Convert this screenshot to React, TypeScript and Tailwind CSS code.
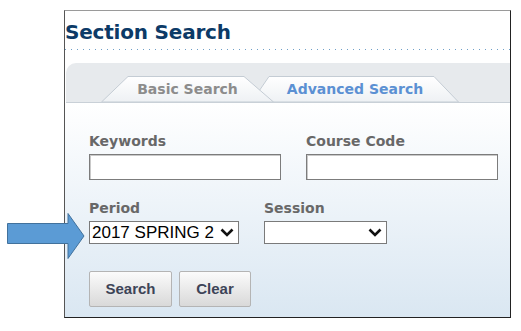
import React from 'react'

const sans = "font-['DejaVu_Sans',Verdana,sans-serif]"
const arial = "font-['Liberation_Sans',Arial,sans-serif]"

function Chevron() {
  return (
    <svg width="14" height="9" viewBox="0 0 14 9" className="shrink-0">
      <path d="M1.5 1.5 L7 7 L12.5 1.5" fill="none" stroke="#111" strokeWidth="2.6" strokeLinejoin="miter" />
    </svg>
  )
}

function Tab({ id, label, active, width, points }: { id: string; label: string; active?: boolean; width: number; points: string }) {
  return (
    <div className={`relative h-[26px] flex items-center justify-center ${active ? 'z-10' : 'z-0'}`} style={{ width }}>
      <svg className="absolute inset-0" width={width} height="26" viewBox={`0 0 ${width} 26`}>
        <defs>
          <linearGradient id={id} x1="0" y1="0" x2="0" y2="1">
            <stop offset="0" stopColor="#ffffff" />
            <stop offset="1" stopColor="#eef1f4" />
          </linearGradient>
        </defs>
        <polygon points={points} fill={`url(#${id})`} stroke="#c4ccd4" strokeWidth="1" />
      </svg>
      <span className={`relative text-[14px] font-bold ${sans} ${active ? 'text-[#8c8c8c]' : 'text-[#5b90d3]'}`}>
        {label}
      </span>
    </div>
  )
}

function Field({ label, children }: { label: string; children: React.ReactNode }) {
  return (
    <div className="flex flex-col">
      <div className={`text-[14px] leading-[17px] font-bold text-[#686868] mb-[4px] ${sans}`}>{label}</div>
      {children}
    </div>
  )
}

function SelectBox({ value, width }: { value: string; width: number }) {
  return (
    <div
      className={`h-[23px] bg-white border border-[#7a7a7a] flex items-center justify-between pl-[2px] pr-[4px] text-[17px] text-black ${arial}`}
      style={{ width }}
    >
      <span className="leading-none">{value}</span>
      <Chevron />
    </div>
  )
}

function Button({ label, width }: { label: string; width: number }) {
  return (
    <button
      className={`h-[36px] rounded-[2px] border border-[#b4b4b4] bg-gradient-to-b from-[#fbfbfb] to-[#d9d9d9] text-[15px] font-bold text-[#3d4457] ${arial}`}
      style={{ width }}
    >
      {label}
    </button>
  )
}

export default function App() {
  return (
    <div className="relative w-[521px] h-[331px] bg-white overflow-hidden">
      <div className="ml-[64px] mt-[10px] w-[447px] h-[308px] border border-t-[#9a9a9a] border-l-[#555] border-r-[#222] border-b-[#222] flex flex-col">
        {/* Title */}
        <h1 className={`pt-[9px] text-[20px] leading-[24px] font-bold text-[#0c3a67] tracking-[-0.2px] ${sans}`}>
          Section Search
        </h1>
        <div className="mt-[5px] h-px bg-[linear-gradient(to_right,#6f9fc8_1px,transparent_1px)] bg-[length:6px_1px]"></div>

        {/* Tab band */}
        <div className="mt-[13px] ml-[1px] h-[40px] rounded-tl-[10px] bg-[#e7eaed] border-b border-[#c9d0d7] flex items-end pl-[35px]">
          <Tab id="tabBasic" label="Basic Search" active width={173} points="0.5,26 27,0.5 143,0.5 172.5,26" />
          <div className="-ml-[23px]">
            <Tab id="tabAdvanced" label="Advanced Search" width={208} points="0.5,26 18,0.5 183,0.5 207.5,26" />
          </div>
        </div>

        {/* Form */}
        <div className="flex-1 bg-gradient-to-b from-white to-[#dae7f2] pl-[24px] pt-[30px]">
          <div className="flex gap-[25px]">
            <Field label="Keywords">
              <div className="w-[192px] h-[26px] bg-white border border-[#7c7c7c] shadow-[inset_1px_1px_0_#c9c9c9]"></div>
            </Field>
            <Field label="Course Code">
              <div className="w-[192px] h-[26px] bg-white border border-[#7c7c7c] shadow-[inset_1px_1px_0_#c9c9c9]"></div>
            </Field>
          </div>
          <div className="flex gap-[25px] mt-[20px]">
            <Field label="Period">
              <SelectBox value="2017 SPRING 2" width={150} />
            </Field>
            <Field label="Session">
              <SelectBox value="" width={123} />
            </Field>
          </div>
          <div className="flex gap-[7px] mt-[27px]">
            <Button label="Search" width={83} />
            <Button label="Clear" width={72} />
          </div>
        </div>
      </div>

      {/* Callout arrow */}
      <svg className="absolute left-[7px] top-[213px]" width="80" height="47" viewBox="0 0 80 47">
        <polygon points="0.5,10.5 61,10.5 61,0.5 77,23 61,45.5 61,30.5 0.5,30.5" fill="#5b9bd5" stroke="#41719c" strokeWidth="1" />
      </svg>
    </div>
  )
}
